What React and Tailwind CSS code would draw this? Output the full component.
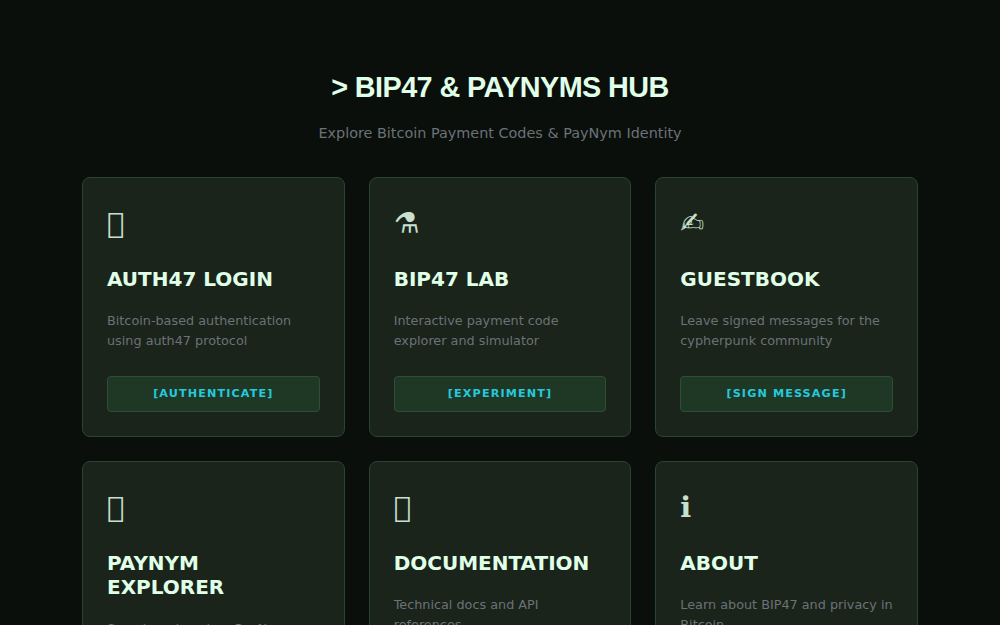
const cards = [
  { icon: "\u{10FFFD}", title: "AUTH47 LOGIN", desc: "Bitcoin-based authentication using auth47 protocol", cta: "[AUTHENTICATE]" },
  { icon: "⚗", title: "BIP47 LAB", desc: "Interactive payment code explorer and simulator", cta: "[EXPERIMENT]" },
  { icon: "✍", title: "GUESTBOOK", desc: "Leave signed messages for the cypherpunk community", cta: "[SIGN MESSAGE]" },
  { icon: "\u{10FFFD}", title: "PAYNYM EXPLORER", desc: "Search and explore PayNym identities", cta: "[EXPLORE]" },
  { icon: "\u{10FFFD}", title: "DOCUMENTATION", desc: "Technical docs and API references", cta: "[READ DOCS]" },
  { icon: "ℹ", title: "ABOUT", desc: "Learn about BIP47 and privacy in Bitcoin", cta: "[LEARN MORE]" },
];

function Card({ icon, title, desc, cta }) {
  return (
    <div className="flex flex-col rounded-lg border border-[#2a4433] bg-[#1a241a] p-6">
      <div className="mb-[16px] h-[49px] text-[28.8px] leading-[42px] text-[#c8e0d0]">{icon}</div>
      <h2 className="mb-[20px] text-[20px] leading-[24px] font-bold text-[#e0ffe8]">{title}</h2>
      <p className="mb-[25px] text-[12.8px] leading-[20px] text-[#6b7278]">{desc}</p>
      <div className="mt-auto flex h-9 items-center justify-center rounded border border-[#2d4f38] bg-[#1f3826] text-[11.2px] font-bold tracking-[1.12px] text-[#26c9dc]">
        {cta}
      </div>
    </div>
  );
}

export default function App() {
  return (
    <div className="min-h-[625px] bg-[#0a0f0b] font-['DejaVu_Sans',sans-serif]">
      <div className="mx-auto max-w-[900px] px-8 pt-[64px] pb-8">
        <h1 className="text-center font-['Liberation_Sans',sans-serif] text-[28.8px] leading-[46px] font-bold tracking-[-0.576px] text-[#e0ffe8]">
          {"> BIP47 & PAYNYMS HUB"}
        </h1>
        <p className="mt-[12px] mb-[33px] text-center text-[14.4px] leading-[22px] text-[#6b7278]">
          Explore Bitcoin Payment Codes &amp; PayNym Identity
        </p>
        <div className="grid grid-cols-3 gap-6">
          {cards.map((c) => (
            <Card key={c.title} {...c} />
          ))}
        </div>
      </div>
    </div>
  );
}
